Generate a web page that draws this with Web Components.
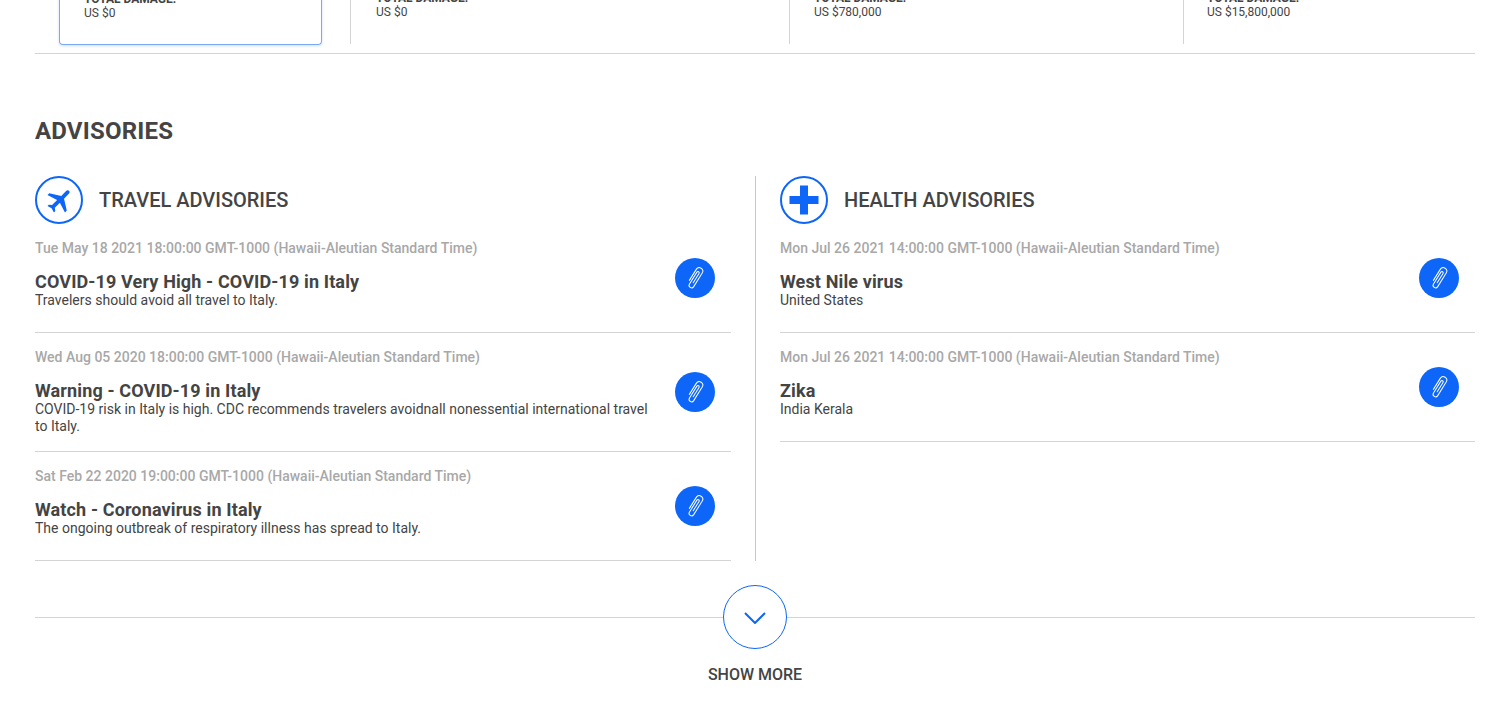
<!DOCTYPE html>
<html>
<head>
<meta charset="utf-8">
<title>Advisories</title>
<style>
html, body { margin: 0; padding: 0; background: #fff; overflow: hidden; }
body { font-family: Roboto, "Liberation Sans", sans-serif; color: #444; }
</style>
</head>
<body>
<advisory-page>
  <damage-row>
    <damage-cell active amount="US $0"></damage-cell>
    <damage-cell amount="US $0"></damage-cell>
    <damage-cell amount="US $780,000" pad="24"></damage-cell>
    <damage-cell amount="US $15,800,000" pad="23"></damage-cell>
  </damage-row>
  <h-title>ADVISORIES</h-title>
  <advisory-columns>
    <advisory-column heading="TRAVEL ADVISORIES" icon="plane">
      <advisory-item date="Tue May 18 2021 18:00:00 GMT-1000 (Hawaii-Aleutian Standard Time)" title="COVID-19 Very High - COVID-19 in Italy">Travelers should avoid all travel to Italy.</advisory-item>
      <advisory-item date="Wed Aug 05 2020 18:00:00 GMT-1000 (Hawaii-Aleutian Standard Time)" title="Warning - COVID-19 in Italy">COVID-19 risk in Italy is high. CDC recommends travelers avoidnall nonessential international travel to Italy.</advisory-item>
      <advisory-item date="Sat Feb 22 2020 19:00:00 GMT-1000 (Hawaii-Aleutian Standard Time)" title="Watch - Coronavirus in Italy">The ongoing outbreak of respiratory illness has spread to Italy.</advisory-item>
    </advisory-column>
    <advisory-column heading="HEALTH ADVISORIES" icon="plus">
      <advisory-item date="Mon Jul 26 2021 14:00:00 GMT-1000 (Hawaii-Aleutian Standard Time)" title="West Nile virus">United States</advisory-item>
      <advisory-item date="Mon Jul 26 2021 14:00:00 GMT-1000 (Hawaii-Aleutian Standard Time)" title="Zika">India Kerala</advisory-item>
    </advisory-column>
  </advisory-columns>
  <show-more></show-more>
</advisory-page>

<script>
const BLUE = '#0d66f8';

class AdvisoryPage extends HTMLElement {
    constructor() {
        super();
        this.attachShadow({ mode: 'open' });
        this.shadowRoot.innerHTML = `
            <style>
                :host { display: block; width: 1440px; margin-left: 35px; height: 704px; overflow: hidden; }
            </style>
            <slot></slot>
        `;
    }
}

class DamageRow extends HTMLElement {
    constructor() {
        super();
        this.attachShadow({ mode: 'open' });
        this.shadowRoot.innerHTML = `
            <style>
                :host {
                    display: grid;
                    grid-template-columns: 315px 439px 394px 1fr;
                    margin-top: -60px;
                    border-bottom: 1px solid #d4d4d4;
                    box-sizing: border-box;
                    height: 114px;
                }
            </style>
            <slot></slot>
        `;
    }
}

class DamageCell extends HTMLElement {
    constructor() {
        super();
        this.attachShadow({ mode: 'open' });
        const pad = this.getAttribute('pad') || 25;
        this.shadowRoot.innerHTML = `
            <style>
                :host { display: block; height: 104px; box-sizing: border-box; border-left: 1px solid #d4d4d4; padding: 51px 0 0 ${pad}px; font-size: 12px; color: #444; }
                :host([active]) { border-left: 0; height: 105px; margin: 0 28px 0 24px; padding: 52px 0 0 24px; border: 1px solid #7aa9f3; border-top: 0; border-radius: 4px; box-shadow: 0 1px 3px rgba(13,102,248,.2); }
                b { display: block; font-weight: 700; line-height: 14px; }
                span { display: block; line-height: 14px; font-weight: 400; }
            </style>
            <b>TOTAL DAMAGE:</b>
            <span>${this.getAttribute('amount')}</span>
        `;
    }
}

class HTitle extends HTMLElement {
    constructor() {
        super();
        this.attachShadow({ mode: 'open' });
        this.shadowRoot.innerHTML = `
            <style>
                :host { display: block; font-size: 24px; font-weight: 700; line-height: 28px; letter-spacing: .2px; color: #444; margin: 63px 0 31px; }
            </style>
            <slot></slot>
        `;
    }
}

class AdvisoryColumns extends HTMLElement {
    constructor() {
        super();
        this.attachShadow({ mode: 'open' });
        this.shadowRoot.innerHTML = `
            <style>
                :host { display: grid; grid-template-columns: 721px 719px; }
                ::slotted(:first-child) { border-right: 1px solid #c9c9c9; padding-right: 24px; }
                ::slotted(:last-child) { padding-left: 24px; }
            </style>
            <slot></slot>
        `;
    }
}

class AdvisoryColumn extends HTMLElement {
    constructor() {
        super();
        this.attachShadow({ mode: 'open' });
        const icon = this.getAttribute('icon') === 'plane'
            ? `<path transform="rotate(45 24 24) translate(9.7 7.800) scale(1.3)" fill="${BLUE}" d="M21 16v-2l-8-5V3.5c0-.83-.67-1.5-1.5-1.5S10 2.67 10 3.5V9l-8 5v2l8-2.5V19l-2 1.5V22l3.5-1 3.5 1v-1.5L13 19v-5.500l8 2.500z"/>`
            : `<path fill="${BLUE}" d="M20 9.500h8V20h10.500v8H28v10.500h-8V28H9.500v-8H20z"/>`;
        this.shadowRoot.innerHTML = `
            <style>
                :host { display: block; box-sizing: border-box; }
                header { display: flex; align-items: center; gap: 16px; height: 48px; }
                svg { width: 48px; height: 48px; flex: none; display: block; }
                h3 { margin: 0; font-size: 20px; font-weight: 500; color: #444; }
            </style>
            <header>
                <svg viewBox="0 0 48 48">
                    <circle cx="24" cy="24" r="23" fill="none" stroke="${BLUE}" stroke-width="2"/>
                    ${icon}
                </svg>
                <h3>${this.getAttribute('heading')}</h3>
            </header>
            <slot></slot>
        `;
    }
}

class AdvisoryItem extends HTMLElement {
    constructor() {
        super();
        this.attachShadow({ mode: 'open' });
        this.shadowRoot.innerHTML = `
            <style>
                :host { display: flex; align-items: center; box-sizing: border-box; min-height: 109px; padding: 16px 16px 16px 0; border-bottom: 1px solid #d4d4d4; }
                .text { flex: 1; min-width: 0; padding-right: 20px; align-self: flex-start; }
                time { display: block; font-size: 14px; line-height: 16px; color: #a8a8a8; font-weight: 500; }
                h4 { margin: 15px 0 0; font-size: 18px; line-height: 21px; font-weight: 700; letter-spacing: .13px; color: #444; }
                p { margin: 0; font-size: 14px; line-height: 17px; color: #444; }
                button { width: 40px; height: 40px; flex: none; border: 0; padding: 0; border-radius: 50%; background: ${BLUE}; display: flex; align-items: center; justify-content: center; }
                svg { width: 28px; height: 28px; display: block; }
            </style>
            <div class="text">
                <time>${this.getAttribute('date')}</time>
                <h4>${this.getAttribute('title')}</h4>
                <p><slot></slot></p>
            </div>
            <button>
                <svg viewBox="0 0 28 28" fill="none" stroke="#fff" stroke-width="1" stroke-linecap="round">
                    <path transform="rotate(32 14 14)" d="M10.500 19V6a3.500 3.500 0 0 1 7 0V22a2.500 2.500 0 0 1-5 0V8a1.250 1.250 0 0 1 2.500 0V19"/>
                </svg>
            </button>
        `;
    }
}

class ShowMore extends HTMLElement {
    constructor() {
        super();
        this.attachShadow({ mode: 'open' });
        this.shadowRoot.innerHTML = `
            <style>
                :host { display: block; margin-top: 24px; }
                .line { display: flex; align-items: center; }
                .line i { flex: 1; height: 1px; background: #d4d4d4; }
                .btn { width: 64px; height: 64px; box-sizing: border-box; border: 1px solid ${BLUE}; border-radius: 50%; display: flex; align-items: center; justify-content: center; }
                svg { width: 22px; height: 12px; display: block; margin-top: 2px; }
                .label { text-align: center; font-size: 16px; font-weight: 500; line-height: 19px; color: #444; margin-top: 16px; }
            </style>
            <div class="line">
                <i></i>
                <div class="btn">
                    <svg viewBox="0 0 22 12"><path d="M1 1l10 10L21 1" fill="none" stroke="${BLUE}" stroke-width="2"/></svg>
                </div>
                <i></i>
            </div>
            <div class="label">SHOW MORE</div>
        `;
    }
}

customElements.define('advisory-page', AdvisoryPage);
customElements.define('damage-row', DamageRow);
customElements.define('damage-cell', DamageCell);
customElements.define('h-title', HTitle);
customElements.define('advisory-columns', AdvisoryColumns);
customElements.define('advisory-column', AdvisoryColumn);
customElements.define('advisory-item', AdvisoryItem);
customElements.define('show-more', ShowMore);
</script>
</body>
</html>
